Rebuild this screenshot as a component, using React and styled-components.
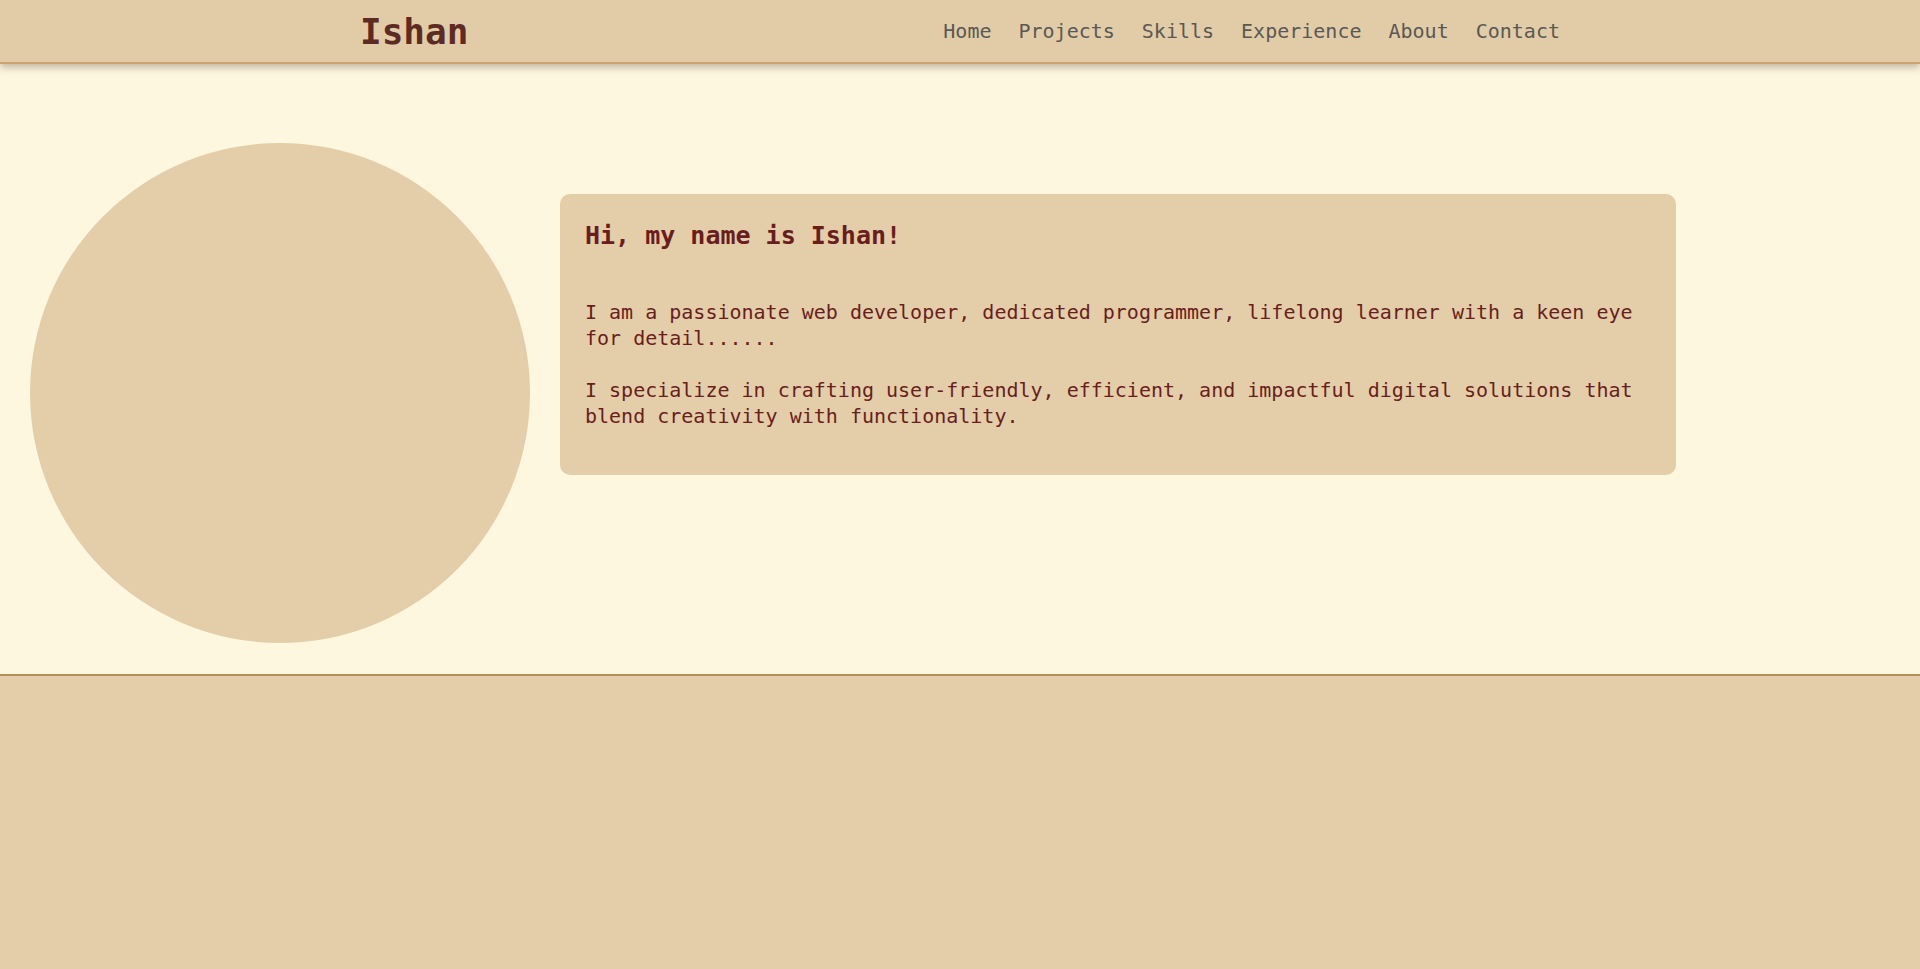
import React from "react";
import styled, { createGlobalStyle } from "styled-components";

const colors = {
  cream: "#fef7df",
  sand: "#e4cea9",
  headerSand: "#e2cca8",
  headerLine: "#c9a470",
  footerLine: "#b48e55",
  logo: "#5e2a24",
  nav: "#5a5854",
  text: "#6a1d1d",
};

const GlobalStyle = createGlobalStyle`
  * {
    box-sizing: border-box;
  }
  body {
    margin: 0;
    background: ${colors.sand};
    font-family: "DejaVu Sans Mono", "Liberation Mono", monospace;
  }
`;

const Header = styled.header`
  position: relative;
  z-index: 10;
  height: 64px;
  background-color: ${colors.headerSand};
  border-bottom: 2px solid ${colors.headerLine};
  box-shadow: 0 3px 8px rgba(60, 50, 30, 0.35);
`;

const HeaderInner = styled.div`
  width: 1200px;
  height: 100%;
  margin: 0 auto;
  display: flex;
  align-items: center;
  justify-content: space-between;
`;

const Logo = styled.a`
  font-size: 36px;
  font-weight: 700;
  color: ${colors.logo};
  text-decoration: none;
  margin-top: 1px;
`;

const NavList = styled.ul`
  list-style: none;
  margin: 0;
  padding: 0;
  display: flex;
  align-items: center;
  gap: 27px;
  a {
    font-size: 20px;
    color: ${colors.nav};
    text-decoration: none;
  }
`;

const Hero = styled.section`
  display: flex;
  align-items: flex-start;
  gap: 30px;
  padding: 79px 0 31px 30px;
  background-color: ${colors.cream};
`;

const Avatar = styled.div`
  flex: 0 0 500px;
  width: 500px;
  height: 500px;
  border-radius: 50%;
  background-color: ${colors.sand};
`;

const IntroCard = styled.div`
  width: 1116px;
  margin-top: 51px;
  padding: 26px 26px 25px 25px;
  border-radius: 10px;
  background-color: ${colors.sand};
  color: ${colors.text};
`;

const Greeting = styled.h2`
  margin: 0 0 47px;
  font-size: 25px;
  line-height: 32px;
  font-weight: 700;
`;

const Bio = styled.p`
  margin: 0 0 21px;
  font-size: 20px;
  line-height: 26px;
`;

const Footer = styled.footer`
  height: 295px;
  border-top: 2px solid ${colors.footerLine};
  background-color: ${colors.sand};
`;

const links = ["Home", "Projects", "Skills", "Experience", "About", "Contact"];

export default function App() {
  return (
    <>
      <GlobalStyle />
      <Header>
        <HeaderInner>
          <Logo href="#">Ishan</Logo>
          <nav>
            <NavList>
              {links.map((l) => (
                <li key={l}>
                  <a href="#">{l}</a>
                </li>
              ))}
            </NavList>
          </nav>
        </HeaderInner>
      </Header>
      <Hero>
        <Avatar />
        <IntroCard>
          <Greeting>Hi, my name is Ishan!</Greeting>
          <Bio>
            I am a passionate web developer, dedicated programmer, lifelong
            learner with a keen eye for detail......
            <br />
            <br />
            I specialize in crafting user-friendly, efficient, and impactful
            digital solutions that blend creativity with functionality.
          </Bio>
        </IntroCard>
      </Hero>
      <Footer />
    </>
  );
}
